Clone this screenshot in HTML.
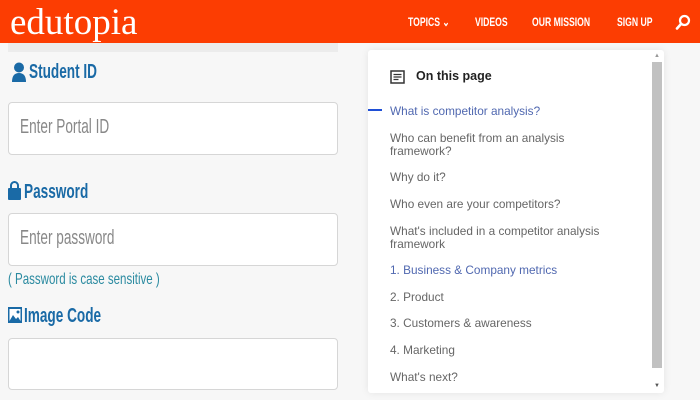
<!DOCTYPE html>
<html><head><meta charset="utf-8"><style>
*{margin:0;padding:0;box-sizing:border-box}
body{width:700px;height:400px;overflow:hidden;background:#f7f7f7;font-family:"Liberation Sans",sans-serif;position:relative}
.hdr{position:absolute;left:0;top:0;width:700px;height:43px;background:#fc3d02}
.logo{position:absolute;left:10px;top:1px;font-family:"Liberation Serif",serif;color:#fff;font-size:37px}
.nav{position:absolute;top:15px;color:#fff;font-size:12px;font-weight:bold;transform:scaleX(.72);transform-origin:left;white-space:nowrap}
.strip{position:absolute;left:8px;top:43px;width:330px;height:9px;background:#ececec}
.lbl{position:absolute;color:#1a6aa6;font-weight:bold;font-size:20px;transform:scaleX(.68);transform-origin:left;white-space:nowrap}
.inp{position:absolute;left:8px;width:330px;background:#fff;border:1px solid #d6d6d6;border-radius:4px}
.ph{position:absolute;left:20px;color:#888;font-size:20px;transform:scaleX(.68);transform-origin:left;white-space:nowrap}
.panel{position:absolute;left:368px;top:50px;width:296px;height:343px;background:#fff;box-shadow:0 0 8px rgba(0,0,0,.08);border-radius:3px}
.it{position:absolute;left:22px;font-size:11.8px;color:#666;line-height:13px;width:225px}
.sb{position:absolute;left:652px;top:62px;width:10px;height:306px;background:#c1c1c1}
</style></head><body>
<div class="hdr">
<div class="logo">edutopia</div>
<div class="nav" style="left:408px">TOPICS ⌄</div>
<div class="nav" style="left:475px">VIDEOS</div>
<div class="nav" style="left:532px">OUR MISSION</div>
<div class="nav" style="left:617px">SIGN UP</div>
<svg style="position:absolute;left:675px;top:14px" width="16" height="16" viewBox="0 0 16 16"><circle cx="9.5" cy="6.5" r="4.5" fill="none" stroke="#fff" stroke-width="2.2"/><path d="M6 10 L2 14.5" stroke="#fff" stroke-width="2.6" stroke-linecap="round"/></svg>
</div>
<div class="strip"></div>
<svg style="position:absolute;left:11px;top:62px" width="16" height="20" viewBox="0 0 16 20"><circle cx="8" cy="5.5" r="5" fill="#1a6aa6"/><path d="M1 20 Q1 11 8 11 Q15 11 15 20Z" fill="#1a6aa6"/></svg>
<div class="lbl" style="left:29px;top:61px">Student ID</div>
<div class="inp" style="top:102px;height:53px"></div>
<div class="ph" style="top:116px">Enter Portal ID</div>
<svg style="position:absolute;left:8px;top:180px" width="13" height="20" viewBox="0 0 13 20"><path d="M3 9 V5.5 A3.5 3.5 0 0 1 10 5.5 V9" fill="none" stroke="#1a6aa6" stroke-width="2"/><rect x="0" y="8" width="13" height="12" rx="1" fill="#1a6aa6"/></svg>
<div class="lbl" style="left:24px;top:181px">Password</div>
<div class="inp" style="top:213px;height:53px"></div>
<div class="ph" style="top:227px">Enter password</div>
<div style="position:absolute;left:8px;top:271px;font-size:16px;color:#2a8aa0;transform:scaleX(.72);transform-origin:left;white-space:nowrap">( Password is case sensitive )</div>
<svg style="position:absolute;left:8px;top:306px" width="14" height="18" viewBox="0 0 14 18"><rect x="0" y="1" width="14" height="16" fill="#1a6aa6"/><rect x="1.5" y="3" width="11" height="12" fill="#fff"/><path d="M1.5 15 L5 9 L8 13 L10 11 L12.5 15Z" fill="#1a6aa6"/><circle cx="10" cy="6" r="1.5" fill="#1a6aa6"/></svg>
<div class="lbl" style="left:24px;top:305px">Image Code</div>
<div class="inp" style="top:338px;height:52px"></div>
<div class="panel">
<svg style="position:absolute;left:22px;top:20px" width="15" height="14" viewBox="0 0 15 14"><rect x="1" y="1" width="13" height="12" fill="none" stroke="#333" stroke-width="1.5"/><path d="M3.5 4.5h8M3.5 7h8M3.5 9.5h5" stroke="#333" stroke-width="1.2"/></svg>
<div style="position:absolute;left:48px;top:19px;font-size:12.5px;font-weight:bold;color:#222">On this page</div>
<div style="position:absolute;left:0;top:59px;width:14px;height:2px;background:#1f4fd6"></div>
<div class="it" style="top:55px;color:#5068b0">What is competitor analysis?</div>
<div class="it" style="top:82px">Who can benefit from an analysis framework?</div>
<div class="it" style="top:121px">Why do it?</div>
<div class="it" style="top:148px">Who even are your competitors?</div>
<div class="it" style="top:175px">What's included in a competitor analysis framework</div>
<div class="it" style="top:214px;color:#5068b0">1. Business &amp; Company metrics</div>
<div class="it" style="top:241px">2. Product</div>
<div class="it" style="top:267px">3. Customers &amp; awareness</div>
<div class="it" style="top:294px">4. Marketing</div>
<div class="it" style="top:321px">What's next?</div>
</div>
<div class="sb"></div>
<div style="position:absolute;left:654px;top:53px;font-size:6px;color:#999">▲</div>
<div style="position:absolute;left:654px;top:383px;font-size:6px;color:#555">▼</div>
</body></html>
